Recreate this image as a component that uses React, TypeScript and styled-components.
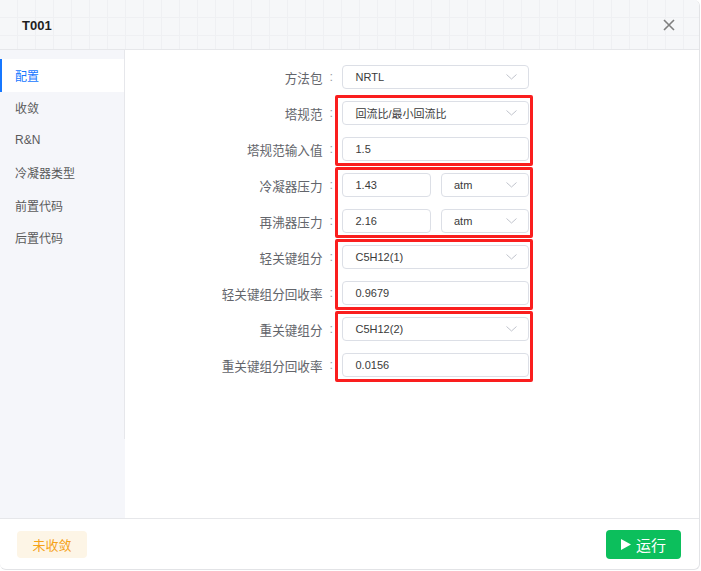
import React, { useState } from 'react';
import styled, { createGlobalStyle } from 'styled-components';

const GlobalStyle = createGlobalStyle`
  html, body {
    margin: 0;
    padding: 0;
    background: #ffffff;
  }
  body {
    font-family: 'Liberation Sans', 'Noto Sans CJK SC', sans-serif;
  }
`;

type Field =
  | { kind: 'select'; label: string; value: string }
  | { kind: 'input'; label: string; value: string }
  | { kind: 'unit'; label: string; value: string; unit: string };

const menuItems = ['配置', '收敛', 'R&N', '冷凝器类型', '前置代码', '后置代码'];

const groups: { marked: boolean; fields: Field[] }[] = [
  { marked: false, fields: [{ kind: 'select', label: '方法包', value: 'NRTL' }] },
  {
    marked: true,
    fields: [
      { kind: 'select', label: '塔规范', value: '回流比/最小回流比' },
      { kind: 'input', label: '塔规范输入值', value: '1.5' },
    ],
  },
  {
    marked: true,
    fields: [
      { kind: 'unit', label: '冷凝器压力', value: '1.43', unit: 'atm' },
      { kind: 'unit', label: '再沸器压力', value: '2.16', unit: 'atm' },
    ],
  },
  {
    marked: true,
    fields: [
      { kind: 'select', label: '轻关键组分', value: 'C5H12(1)' },
      { kind: 'input', label: '轻关键组分回收率', value: '0.9679' },
    ],
  },
  {
    marked: true,
    fields: [
      { kind: 'select', label: '重关键组分', value: 'C5H12(2)' },
      { kind: 'input', label: '重关键组分回收率', value: '0.0156' },
    ],
  },
];

const Chevron = () => (
  <svg width="11" height="6" viewBox="0 0 11 6" fill="none">
    <path d="M0.5 0.5 L5.5 5 L10.5 0.5" stroke="#c0c4cc" strokeWidth="1" />
  </svg>
);

const App = () => {
  const [active, setActive] = useState(0);

  const renderControl = (f: Field) => {
    if (f.kind === 'select') {
      return (
        <Box>
          <Value>{f.value}</Value>
          <Chevron />
        </Box>
      );
    }
    if (f.kind === 'input') {
      return (
        <Box>
          <Value>{f.value}</Value>
        </Box>
      );
    }
    return (
      <Pair>
        <Box>
          <Value>{f.value}</Value>
        </Box>
        <Box>
          <Value>{f.unit}</Value>
          <Chevron />
        </Box>
      </Pair>
    );
  };

  return (
    <>
      <GlobalStyle />
      <Dialog>
        <Header>
          <Title>T001</Title>
          <Close>
            <svg width="12" height="12" viewBox="0 0 12 12">
              <path d="M1 1 L11 11 M11 1 L1 11" stroke="#7f7f7f" strokeWidth="1.6" />
            </svg>
          </Close>
        </Header>
        <Body>
          <Sidebar>
            <Menu>
              {menuItems.map((m, i) => (
                <MenuItem key={m} active={i === active} onClick={() => setActive(i)}>
                  {m}
                </MenuItem>
              ))}
            </Menu>
          </Sidebar>
          <Content>
            <Form>
              {groups.map((g, gi) => (
                <Group key={gi} marked={g.marked}>
                  {g.fields.map(f => (
                    <Row key={f.label}>
                      <Label>
                        {f.label}
                        <Colon>:</Colon>
                      </Label>
                      <Control>{renderControl(f)}</Control>
                    </Row>
                  ))}
                </Group>
              ))}
            </Form>
          </Content>
        </Body>
        <Footer>
          <Status>未收敛</Status>
          <RunButton>
            <svg width="10" height="11" viewBox="0 0 10 11">
              <path d="M0 0 L10 5.5 L0 11 Z" fill="#ffffff" />
            </svg>
            运行
          </RunButton>
        </Footer>
      </Dialog>
    </>
  );
};

const Dialog = styled.div`
  width: 700px;
  height: 570px;
  box-sizing: border-box;
  border: 1px solid #e2e3e6;
  border-left: none;
  border-top: none;
  border-radius: 0 6px 6px 6px;
  overflow: hidden;
  display: flex;
  flex-direction: column;
  background: #ffffff;
`;

const Header = styled.div`
  height: 49px;
  flex-shrink: 0;
  display: flex;
  align-items: center;
  justify-content: space-between;
  padding: 0 24px 0 22px;
  border-bottom: 1px solid #e6e7ea;
  background-color: #f6f7f9;
  background-image: linear-gradient(to right, #eff0f3 1px, transparent 1px),
    linear-gradient(to bottom, #eff0f3 1px, transparent 1px);
  background-size: 18px 18px;
  background-position: 17px 17px;
`;

const Title = styled.div`
  font-size: 13px;
  font-weight: bold;
  color: #1f1f1f;
  padding-top: 1px;
`;

const Close = styled.div`
  width: 12px;
  height: 12px;
  display: flex;
  cursor: pointer;
`;

const Body = styled.div`
  flex: 1;
  display: flex;
  min-height: 0;
`;

const Sidebar = styled.div`
  width: 125px;
  flex-shrink: 0;
  background: #f5f6fa;
`;

const Menu = styled.div`
  height: 389px;
  box-sizing: border-box;
  padding-top: 9px;
  border-right: 1px solid #e6e7eb;
  display: flex;
  flex-direction: column;
`;

const MenuItem = styled.div<{ active: boolean }>`
  height: 32.5px;
  display: flex;
  align-items: center;
  padding-left: 15px;
  font-size: 12px;
  color: ${p => (p.active ? '#1677ff' : '#5a5a5a')};
  background: ${p => (p.active ? '#ffffff' : 'transparent')};
  box-shadow: ${p => (p.active ? 'inset 2px 0 0 #1677ff' : 'none')};
  cursor: pointer;
`;

const Content = styled.div`
  flex: 1;
  background: #ffffff;
`;

const Form = styled.div`
  width: 391px;
  padding: 15px 0 0 13px;
  display: flex;
  flex-direction: column;
  gap: 12px;
`;

const Group = styled.div<{ marked: boolean }>`
  position: relative;
  display: flex;
  flex-direction: column;
  gap: 12px;

  &::after {
    content: '';
    display: ${p => (p.marked ? 'block' : 'none')};
    position: absolute;
    left: 197px;
    right: -4px;
    top: -6px;
    bottom: -5px;
    border: 3px solid #fa1e1e;
    border-radius: 2px;
    pointer-events: none;
  }
`;

const Row = styled.div`
  height: 24px;
  display: flex;
  align-items: center;
  gap: 4px;
`;

const Label = styled.div`
  width: 200px;
  flex-shrink: 0;
  display: flex;
  justify-content: flex-end;
  align-items: center;
  font-size: 12.6px;
  color: #63656b;
  white-space: nowrap;
`;

const Colon = styled.span`
  margin: 0 5px 0 7px;
  color: #9a9ca2;
`;

const Control = styled.div`
  width: 187px;
  height: 24px;
`;

const Pair = styled.div`
  display: flex;
  gap: 10px;
  height: 100%;

  & > * {
    flex: 1;
  }
`;

const Box = styled.div`
  height: 24px;
  box-sizing: border-box;
  border: 1px solid #dcdfe6;
  border-radius: 4px;
  background: #ffffff;
  display: flex;
  align-items: center;
  justify-content: space-between;
  padding: 0 11px 0 12.5px;
`;

const Value = styled.span`
  font-size: 11px;
  color: #3a3a3a;
  white-space: nowrap;
`;

const Footer = styled.div`
  height: 51px;
  flex-shrink: 0;
  box-sizing: border-box;
  border-top: 1px solid #e6e7ea;
  display: flex;
  align-items: center;
  justify-content: space-between;
  padding: 0 18px 0 17px;
`;

const Status = styled.div`
  width: 70px;
  height: 27px;
  border-radius: 4px;
  background: #fdf5e6;
  color: #f5a31a;
  font-size: 13px;
  display: flex;
  align-items: center;
  justify-content: center;
`;

const RunButton = styled.button`
  width: 75px;
  height: 29px;
  border: none;
  border-radius: 4px;
  background: #0cbf5c;
  color: #ffffff;
  font-family: 'Liberation Sans', 'Noto Sans CJK SC', sans-serif;
  font-size: 15px;
  display: flex;
  align-items: center;
  justify-content: center;
  gap: 5px;
  cursor: pointer;
  padding: 0;
`;

export default App;
